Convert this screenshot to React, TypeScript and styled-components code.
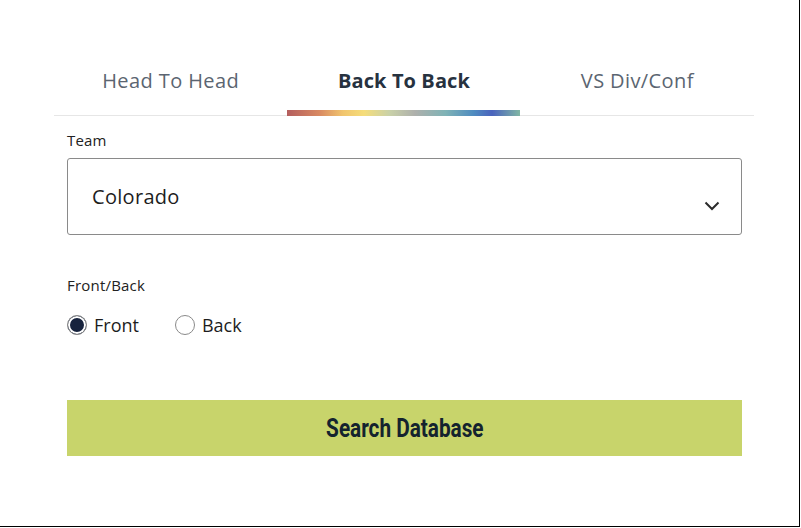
import React, { useState } from "react";
import styled, { createGlobalStyle } from "styled-components";

const Global = createGlobalStyle`
  html, body { margin: 0; padding: 0; background: #fff; }
  * { box-sizing: border-box; }
  body { font-family: "Open Sans", "Lato", sans-serif; }
`;

const Frame = styled.div`
  width: 800px;
  height: 527px;
  border-right: 1px solid #000;
  border-bottom: 1px solid #000;
  padding-top: 69px;
  display: flex;
  flex-direction: column;
`;

const TabRow = styled.div`
  display: grid;
  grid-template-columns: repeat(3, 1fr);
  margin: 0 45px 0 54px;
  border-bottom: 1px solid #e6e6e6;
`;

const Tab = styled.button<{ $active?: boolean }>`
  appearance: none;
  border: 0;
  background: none;
  padding: 0;
  display: flex;
  flex-direction: column;
  align-items: center;
  font-family: "Open Sans", "Lato", sans-serif;
  font-size: 20px;
  line-height: 24px;
  letter-spacing: ${(p) => (p.$active ? "0.1px" : "0.4px")};
  font-weight: ${(p) => (p.$active ? 700 : 400)};
  color: ${(p) => (p.$active ? "#27323f" : "#5b6571")};
  cursor: pointer;
`;

const TabBar = styled.span<{ $active?: boolean }>`
  display: block;
  align-self: stretch;
  height: 6px;
  margin: 17px 1px -1px 0;
  background: ${(p) =>
    p.$active
      ? "linear-gradient(90deg, #b45e5e 0%, #d98a62 14%, #f1c56e 24%, #f5dd7a 33%, #c9d1a8 44%, #aeb0ac 55%, #7fb3b6 68%, #4f8cc0 80%, #4a63bd 88%, #80b6a4 100%)"
      : "transparent"};
`;

const Form = styled.div`
  padding: 15px 57px 0 67px;
  display: flex;
  flex-direction: column;
`;

const Label = styled.div`
  font-size: 15px;
  line-height: 18px;
  letter-spacing: 0.2px;
  color: #222;
`;

const SelectBox = styled.div`
  margin-top: 9px;
  height: 77px;
  border: 1px solid #8a8a8a;
  border-radius: 3px;
  display: flex;
  align-items: center;
  justify-content: space-between;
  padding: 0 21px 0 24px;
  font-size: 20px;
  letter-spacing: 0.3px;
  color: #1d1d1d;
`;

const Chevron = styled.svg`
  align-self: flex-end;
  margin-bottom: 23px;
`;

const RadioLabel = styled(Label)`
  margin-top: 41px;
`;

const RadioRow = styled.div`
  display: flex;
  align-items: center;
  gap: 36px;
  margin-top: 19px;
`;

const RadioItem = styled.label`
  display: flex;
  align-items: center;
  gap: 7px;
  font-size: 18px;
  color: #1d1d1d;
  cursor: pointer;
`;

const RadioInput = styled.input`
  appearance: none;
  margin: 0;
  width: 20px;
  height: 20px;
  border-radius: 50%;
  border: 1px solid #8a8a8a;
  background: #fff;
  &:checked {
    background: #16223d;
    box-shadow: inset 0 0 0 2px #fff;
  }
`;

const SearchButton = styled.button`
  appearance: none;
  border: 0;
  margin-top: 63px;
  height: 56px;
  background: #c8d46b;
  color: #14232e;
  display: flex;
  align-items: center;
  justify-content: center;
  cursor: pointer;
`;

const ButtonText = styled.span`
  font-family: "Roboto", sans-serif;
  font-weight: 700;
  font-size: 25px;
  display: inline-block;
  transform: scaleX(0.83);
`;

export default function App() {
  const [tab, setTab] = useState(1);
  const [side, setSide] = useState("front");
  const tabs = ["Head To Head", "Back To Back", "VS Div/Conf"];
  return (
    <Frame>
      <Global />
      <TabRow>
        {tabs.map((t, i) => (
          <Tab key={t} $active={i === tab} onClick={() => setTab(i)}>
            {t}
            <TabBar $active={i === tab} />
          </Tab>
        ))}
      </TabRow>
      <Form>
        <Label>Team</Label>
        <SelectBox>
          <span>Colorado</span>
          <Chevron width="16" height="10" viewBox="0 0 16 10">
            <path d="M1.5 1.5 L8 8 L14.5 1.5" fill="none" stroke="#2b2b2b" strokeWidth="2" />
          </Chevron>
        </SelectBox>
        <RadioLabel>Front/Back</RadioLabel>
        <RadioRow>
          <RadioItem>
            <RadioInput type="radio" name="fb" checked={side === "front"} onChange={() => setSide("front")} />
            Front
          </RadioItem>
          <RadioItem>
            <RadioInput type="radio" name="fb" checked={side === "back"} onChange={() => setSide("back")} />
            Back
          </RadioItem>
        </RadioRow>
        <SearchButton>
          <ButtonText>Search Database</ButtonText>
        </SearchButton>
      </Form>
    </Frame>
  );
}
